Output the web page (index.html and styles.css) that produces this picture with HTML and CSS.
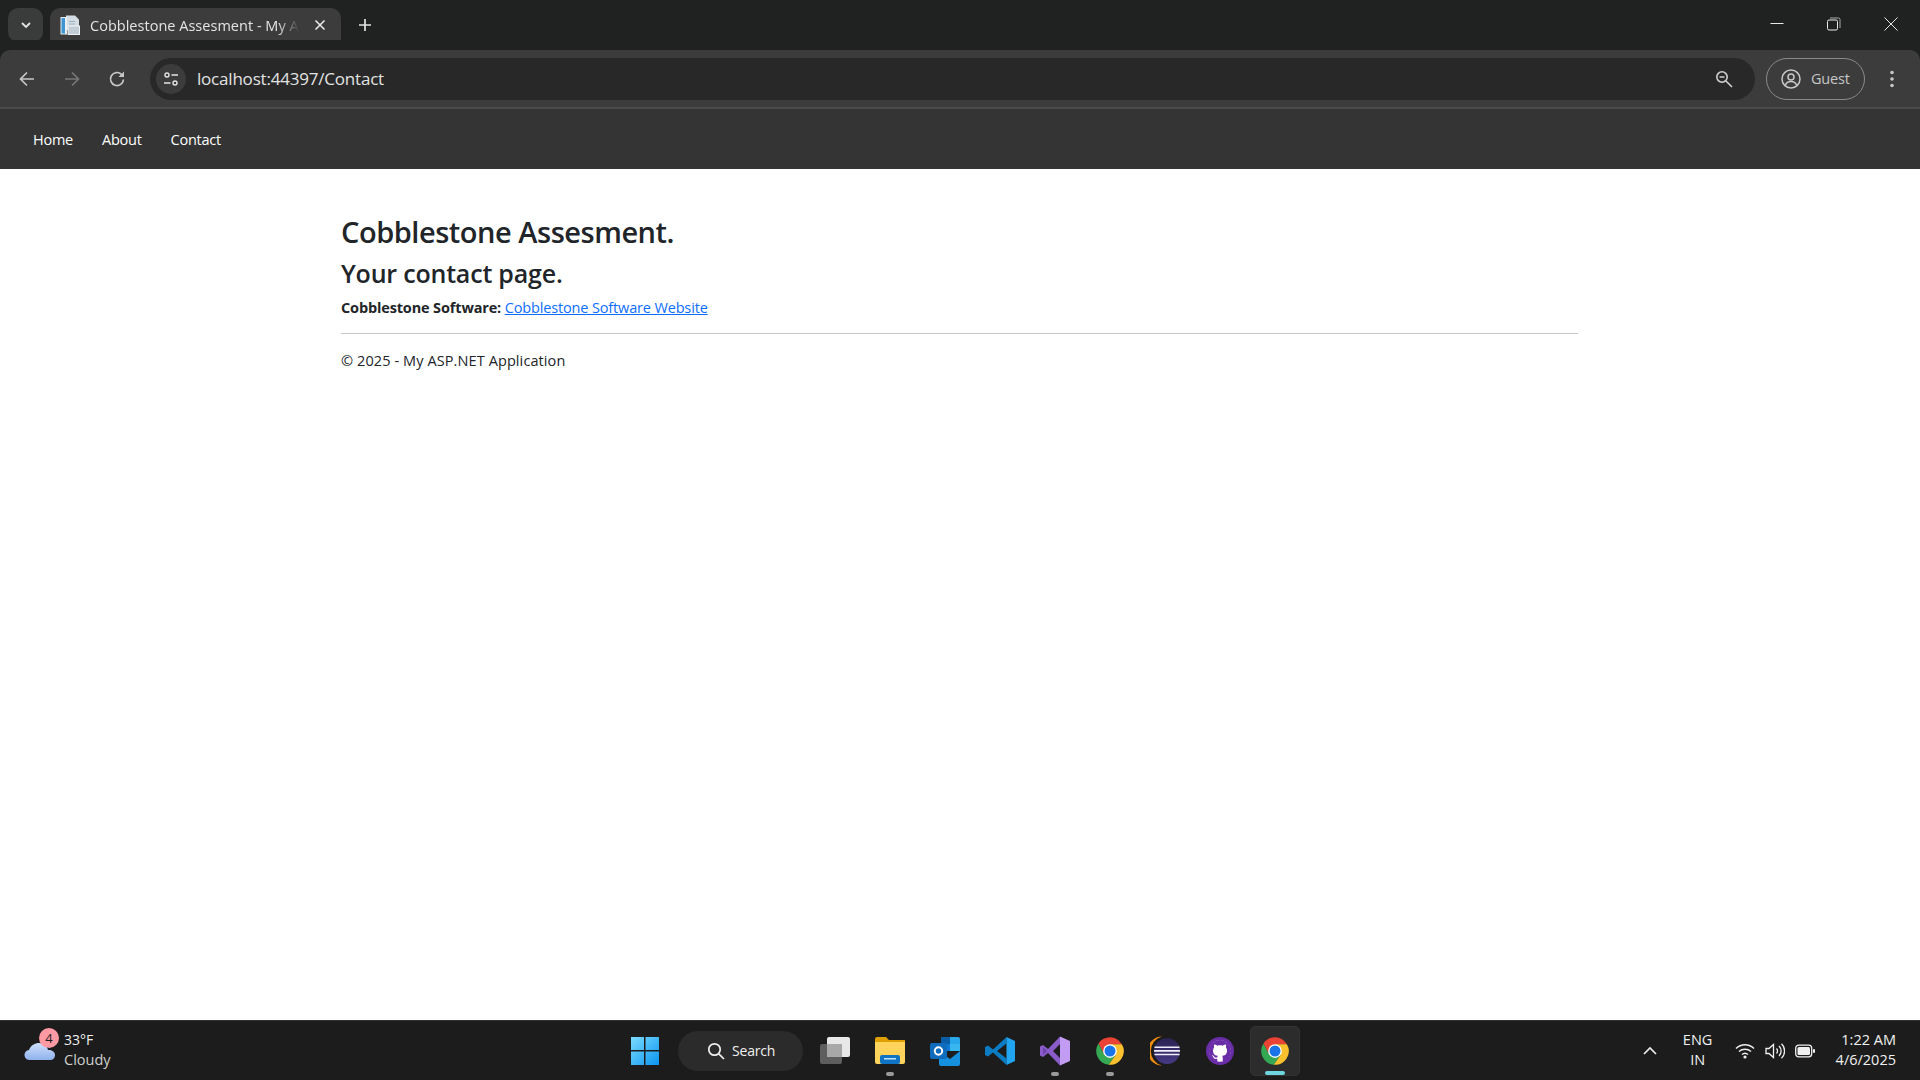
FILE: index.html
```html
<!DOCTYPE html>
<html lang="en">
<head>
<meta charset="utf-8">
<title>Cobblestone Assesment - My ASP.NET Application</title>
<link rel="stylesheet" href="styles.css">
</head>
<body>
<svg class="defs" width="0" height="0" aria-hidden="true">
  <symbol id="chrome" viewBox="0 0 48 48">
    <path fill="#ea4335" d="M43 13A22 22 0 0 0 5.500 12L14.500 29.500 24 13Z"/>
    <path fill="#34a853" d="M5.500 12A22 22 0 0 0 22 46L33.500 29.500H14.500Z"/>
    <path fill="#fbc02d" d="M43 13H24L33.500 29.500 22 46A22 22 0 0 0 43 13Z"/>
    <circle cx="24" cy="24" r="11" fill="#fff"/>
    <circle cx="24" cy="24" r="8.800" fill="#1a73e8"/>
  </symbol>
  <linearGradient id="winGrad" x1="0" y1="0" x2="1" y2="1">
    <stop offset="0" stop-color="#7cdcff"/><stop offset="1" stop-color="#0a94f0"/>
  </linearGradient>
  <linearGradient id="eclipseGrad" x1="0" y1="0" x2="0" y2="1">
    <stop offset="0" stop-color="#2a2350"/><stop offset="1" stop-color="#473a86"/>
  </linearGradient>
</svg>

<header class="tabstrip">
  <div class="tab-menu">
    <svg width="12" height="12" viewBox="0 0 12 12"><path d="M2 4l4 4 4-4" fill="none" stroke="#e3e3e3" stroke-width="1.800"/></svg>
  </div>
  <div class="tab">
    <svg class="favicon" width="20" height="20" viewBox="0 0 20 20">
      <path fill="#d5dde4" d="M6 0.500h9l4 4V15H6z"/>
      <rect x="0.500" y="2" width="6.500" height="17.500" fill="#e8eef3"/>
      <rect x="1.500" y="3" width="3.500" height="15.500" fill="#3f94d2"/>
      <rect x="8" y="11" width="11.500" height="8.500" fill="#c2ccd4" stroke="#eef2f5"/>
      <path fill="#9fb0bd" d="M9 6h6v1H9zM9 8.500h6v1H9z"/>
    </svg>
    <span class="tab-title">Cobblestone Assesment - My AS</span>
    <svg class="tab-close" width="12" height="12" viewBox="0 0 12 12"><path d="M1.500 1.500l9 9m0-9l-9 9" stroke="#e8e8e8" stroke-width="1.600"/></svg>
  </div>
  <svg class="new-tab" width="14" height="14" viewBox="0 0 14 14"><path d="M7 1v12M1 7h12" stroke="#e3e3e3" stroke-width="1.700"/></svg>
  <div class="window-controls">
    <svg class="win-btn" width="14" height="14" viewBox="0 0 14 14"><path d="M0.500 6.500h13" stroke="#e8e8e8"/></svg>
    <svg class="win-btn" width="14" height="14" viewBox="0 0 14 14"><rect x="0.500" y="3" width="10" height="10" rx="1.500" fill="none" stroke="#e8e8e8"/><path d="M3 1h8.500a1.500 1.500 0 0 1 1.500 1.500V11" fill="none" stroke="#a8a8a8"/></svg>
    <svg class="win-btn" width="14" height="14" viewBox="0 0 14 14"><path d="M0.500 0.500l13 13m0-13l-13 13" stroke="#e8e8e8"/></svg>
  </div>
</header>

<div class="toolbar">
  <svg class="nav-icon" width="18" height="18" viewBox="0 0 18 18"><path d="M16 9H2.500M9 2.500L2.500 9 9 15.500" fill="none" stroke="#c7c7c7" stroke-width="1.700"/></svg>
  <svg class="nav-icon" width="18" height="18" viewBox="0 0 18 18"><path d="M2 9h13.500M9 2.500L15.500 9 9 15.500" fill="none" stroke="#777" stroke-width="1.700"/></svg>
  <svg class="nav-icon" width="18" height="18" viewBox="0 0 18 18"><path d="M15.500 9.500A6.500 6.500 0 1 1 13.500 4.300L15.500 6" fill="none" stroke="#c7c7c7" stroke-width="1.700"/><path d="M16 1.500V7H10.500z" fill="#c7c7c7"/></svg>
  <div class="omnibox">
    <span class="site-info">
      <svg width="16" height="16" viewBox="0 0 16 16"><circle cx="4" cy="4" r="2" fill="none" stroke="#e3e3e3" stroke-width="1.400"/><path d="M8.500 4H15M1 12h6.500" stroke="#e3e3e3" stroke-width="1.400"/><circle cx="12" cy="12" r="2" fill="none" stroke="#e3e3e3" stroke-width="1.400"/></svg>
    </span>
    <span class="url">localhost:44397/Contact</span>
    <svg class="zoom-icon" width="18" height="18" viewBox="0 0 18 18"><circle cx="7" cy="7" r="5.200" fill="none" stroke="#d0d0d0" stroke-width="1.600"/><path d="M4.500 7h5M11 11l6 6" stroke="#d0d0d0" stroke-width="1.600"/></svg>
  </div>
  <div class="guest">
    <svg width="20" height="20" viewBox="0 0 20 20"><circle cx="10" cy="10" r="9" fill="none" stroke="#c7c7c7" stroke-width="1.500"/><circle cx="10" cy="8" r="3" fill="none" stroke="#c7c7c7" stroke-width="1.500"/><path d="M4.500 16c1-3 3-3.500 5.500-3.500s4.500.5 5.500 3.500" fill="none" stroke="#c7c7c7" stroke-width="1.500"/></svg>
    <span>Guest</span>
  </div>
  <svg class="kebab" width="6" height="18" viewBox="0 0 6 18"><circle cx="3" cy="2.500" r="1.800" fill="#c7c7c7"/><circle cx="3" cy="9" r="1.800" fill="#c7c7c7"/><circle cx="3" cy="15.500" r="1.800" fill="#c7c7c7"/></svg>
</div>

<nav class="site-nav">
  <a href="#">Home</a>
  <a href="#">About</a>
  <a href="#">Contact</a>
</nav>

<main class="page">
  <h2>Cobblestone Assesment.</h2>
  <h3>Your contact page.</h3>
  <p class="contact-line"><strong>Cobblestone Software:</strong> <a href="#">Cobblestone Software Website</a></p>
  <hr>
  <footer>© 2025 - My ASP.NET Application</footer>
</main>

<div class="taskbar">
  <div class="weather">
    <span class="weather-icon">
      <svg width="32" height="22" viewBox="0 0 32 22"><defs><linearGradient id="cloud" x1="0" y1="0" x2="0" y2="1"><stop offset="0" stop-color="#cfe0fb"/><stop offset="1" stop-color="#8fb2ee"/></linearGradient></defs><path fill="url(#cloud)" d="M6 21a5 5 0 0 1-1-10C7 6 11 4 15 4c5 0 8 3 9 7 4-.5 7 2 7 5 0 3-2 5-5 5z"/></svg>
      <span class="badge">4</span>
    </span>
    <span class="weather-text"><span class="temp">33°F</span><span class="cond">Cloudy</span></span>
  </div>
  <div class="start">
    <svg width="30" height="30" viewBox="0 0 30 30"><path fill="url(#winGrad)" d="M1 1h13v13H1zM15.500 1H29v13H15.500zM1 15.500h13V29H1zM15.500 15.500H29V29H15.500z"/></svg>
  </div>
  <div class="search">
    <svg width="18" height="18" viewBox="0 0 18 18"><circle cx="7.500" cy="7.500" r="5.700" fill="none" stroke="#f0f0f0" stroke-width="1.700"/><path d="M11.800 11.800L17 17" stroke="#f0f0f0" stroke-width="1.700"/></svg>
    <span>Search</span>
  </div>
  <div class="app first">
    <svg width="30" height="30" viewBox="0 0 30 30"><rect x="0" y="8" width="22" height="20" rx="2" fill="#5e5e5e"/><rect x="7" y="1" width="23" height="20" rx="2" fill="#e8e8e8"/><rect x="7" y="8" width="15" height="13" fill="#a8a8a8"/></svg>
  </div>
  <div class="app">
    <svg width="30" height="30" viewBox="0 0 30 30"><path fill="#e0a100" d="M0 3a2 2 0 0 1 2-2h9l3 3h16v6H0z"/><path fill="#ffd35c" d="M0 6h30v20a2 2 0 0 1-2 2H2a2 2 0 0 1-2-2z"/><rect x="5" y="19" width="20" height="9" rx="2" fill="#0f74c4"/><rect x="9" y="22" width="12" height="1.500" fill="#bfe2ff"/></svg>
    <i class="dot"></i>
  </div>
  <div class="app">
    <svg width="30" height="30" viewBox="0 0 30 30"><path fill="#0a5ea8" d="M11 1h17v14H11z"/><path fill="#28a8ea" d="M20 1h8a2 2 0 0 1 2 2v6H20z"/><path fill="#0f78d4" d="M11 8h19v7H11z"/><path fill="#38b6f0" d="M20 8h10v7H20z"/><path fill="#1490df" d="M9 15l11 8 10-8v13a2 2 0 0 1-2 2H11a2 2 0 0 1-2-2z"/><rect x="0" y="7" width="17" height="16" rx="2" fill="#0f6cbd"/><circle cx="8.500" cy="15" r="3.700" fill="none" stroke="#fff" stroke-width="2"/></svg>
  </div>
  <div class="app">
    <svg width="30" height="30" viewBox="0 0 30 30"><path fill="#0a7cc4" d="M21.500 1L8 13.500 3 9.500 0 11v8l3 1.500 5-4 13.500 12.500v-6.500L12 15l9.500-7.500z"/><path fill="#22a5f1" d="M21.500 1L30 5v20l-8.500 4z"/></svg>
  </div>
  <div class="app">
    <svg width="30" height="30" viewBox="0 0 30 30"><path fill="#c19cf2" d="M20 0.500L30 5v20l-10 4.500z"/><path fill="#8a5cc9" d="M20 0.500L8 13 3 9 0 10.500v9L3 21 8 17l12 12.500V22l-7-7 7-7z"/><path fill="#6d44ac" d="M3 11l4 4-4 4z"/></svg>
    <i class="dot"></i>
  </div>
  <div class="app">
    <svg width="30" height="30"><use href="#chrome"/></svg>
    <i class="dot"></i>
  </div>
  <div class="app">
    <svg width="30" height="30" viewBox="0 0 30 30"><path fill="#f28d10" d="M12 0.500A15 15 0 0 0 12 29.500 14.500 14.500 0 0 1 12 0.500z"/><circle cx="17" cy="15" r="13" fill="url(#eclipseGrad)"/><path fill="#f0eef8" d="M4.500 10.500h25v1.600h-25zM4 14h26v1.800H4zM4.500 17.700h25v1.600h-25z"/></svg>
  </div>
  <div class="app">
    <svg width="30" height="30" viewBox="0 0 30 30"><circle cx="15" cy="15" r="14" fill="#6a2da8"/><circle cx="15" cy="15" r="10.700" fill="#fff"/><g transform="translate(4 4) scale(1.375)"><path fill="#6a2da8" d="M8 0C3.580 0 0 3.580 0 8c0 3.540 2.290 6.530 5.470 7.590.4.070.55-.17.55-.38 0-.19-.01-.82-.01-1.490-2.010.37-2.530-.49-2.690-.94-.09-.23-.48-.94-.82-1.130-.28-.15-.68-.52-.01-.53.63-.01 1.080.58 1.230.82.72 1.210 1.870.87 2.330.66.070-.52.28-.87.51-1.070-1.780-.2-3.640-.89-3.640-3.950 0-.87.31-1.590.82-2.150-.08-.2-.36-1.020.08-2.120 0 0 .67-.21 2.200.82.64-.18 1.320-.27 2-.27.68 0 1.360.09 2 .27 1.530-1.040 2.200-.82 2.200-.82.44 1.100.16 1.920.08 2.120.51.56.82 1.270.82 2.150 0 3.070-1.870 3.750-3.650 3.950.29.25.54.73.54 1.480 0 1.070-.01 1.930-.01 2.200 0 .21.15.46.55.38A8.013 8.013 0 0 0 16 8c0-4.420-3.580-8-8-8z"/></g></svg>
  </div>
  <div class="app active">
    <svg width="30" height="30"><use href="#chrome"/></svg>
    <i class="bar"></i>
  </div>
  <div class="tray">
    <svg width="14" height="10" viewBox="0 0 14 10"><path d="M1 8l6-6 6 6" fill="none" stroke="#f0f0f0" stroke-width="1.600"/></svg>
    <div class="lang"><span>ENG</span><span>IN</span></div>
    <div class="tray-icons">
      <svg width="20" height="18" viewBox="0 0 20 18"><path d="M1 6.500c5-5 13-5 18 0M4 9.500c3.300-3 8.700-3 12 0M7 12.500c1.700-1.500 4.300-1.500 6 0" fill="none" stroke="#f0f0f0" stroke-width="1.400"/><circle cx="10" cy="15" r="1.600" fill="#f0f0f0"/></svg>
      <svg width="20" height="18" viewBox="0 0 20 18"><path d="M1 6.500h3L8.500 2.500v13L4 11.500H1z" fill="none" stroke="#f0f0f0" stroke-width="1.300"/><path d="M11.500 6.500a3.500 3.500 0 0 1 0 5M14 4a7 7 0 0 1 0 10M16.500 1.800a10 10 0 0 1 0 14.400" fill="none" stroke="#f0f0f0" stroke-width="1.300"/></svg>
      <svg width="20" height="14" viewBox="0 0 20 14"><rect x="0.700" y="1.200" width="16" height="11.600" rx="3" fill="none" stroke="#f0f0f0" stroke-width="1.300"/><rect x="2.500" y="3" width="12.500" height="8" rx="1.500" fill="#f0f0f0"/><rect x="18" y="5" width="2" height="4" rx="1" fill="#f0f0f0"/></svg>
    </div>
    <div class="clock"><span>1:22 AM</span><span>4/6/2025</span></div>
  </div>
</div>
</body>
</html>
```
FILE: styles.css
```css
* { box-sizing: border-box; }
html, body { height: 100%; }
body {
  margin: 0;
  height: 100vh;
  display: flex;
  flex-direction: column;
  overflow: hidden;
  background: #fff;
  font-family: "Open Sans", "Noto Sans", sans-serif;
  color: #212529;
}
.defs { position: absolute; }

/* Browser chrome */
.tabstrip {
  height: 50px;
  flex: none;
  display: flex;
  align-items: flex-start;
  background: #202222;
  padding: 8px 0 0 8px;
}
.tab-menu {
  width: 35px;
  height: 34px;
  border-radius: 10px;
  background: #3a3b3b;
  display: flex;
  align-items: center;
  justify-content: center;
}
.tab {
  width: 291px;
  height: 42px;
  margin-left: 7px;
  border-radius: 10px 10px 0 0;
  background: #3c3c3c;
  display: flex;
  align-items: center;
  padding: 0 14px 8px 10px;
  color: #e3e3e3;
  font-size: 14.5px;
}
.favicon { flex: none; }
.tab-title {
  flex: none;
  width: 218px;
  margin-left: 10px;
  white-space: nowrap;
  letter-spacing: 0.02px;
  -webkit-mask-image: linear-gradient(to right, #000 86%, transparent 96%);
  mask-image: linear-gradient(to right, #000 86%, transparent 96%);
}
.tab-close { margin-left: 6px; flex: none; }
.new-tab { margin: 10px 0 0 17px; }
.window-controls {
  margin-left: auto;
  display: flex;
  gap: 43px;
  padding: 9px 22px 0 0;
}
.toolbar {
  height: 59px;
  flex: none;
  display: flex;
  align-items: center;
  background: #3c3c3c;
  border-bottom: 2px solid #4a4a4a;
  padding: 0 0 0 18px;
  border-radius: 10px 10px 0 0;
  box-shadow: 0 -10px 0 #202222;
}
.nav-icon { margin-right: 27px; flex: none; }
.nav-icon:nth-child(3) { margin-right: 0; }
.omnibox {
  width: 1605px;
  height: 42px;
  margin-left: 24px;
  border-radius: 21px;
  background: #282828;
  display: flex;
  align-items: center;
  padding: 0 16px 0 6px;
}
.site-info {
  width: 30px;
  height: 30px;
  border-radius: 50%;
  background: #3c3c3c;
  display: flex;
  align-items: center;
  justify-content: center;
  flex: none;
}
.url {
  margin-left: 11px;
  font-size: 17px;
  letter-spacing: -0.2px;
  color: #e3e3e3;
}
.zoom-icon { margin-left: auto; margin-right: 6px; }
.guest {
  width: 99px;
  height: 42px;
  margin-left: 11px;
  border: 1px solid #8a8a8a;
  border-radius: 21px;
  display: flex;
  align-items: center;
  gap: 10px;
  padding-left: 14px;
  color: #c7c7c7;
  font-size: 14.500px;
  letter-spacing: -0.2px;
}
.kebab { margin-left: 24px; }

/* Site navbar */
.site-nav {
  height: 60px;
  flex: none;
  display: flex;
  align-items: center;
  gap: 29px;
  padding: 0 0 0 33px;
  background: #343434;
}
.site-nav a {
  color: #fff;
  text-decoration: none;
  font-size: 14.5px;
  letter-spacing: -0.25px;
}

/* Page */
.page {
  flex: 1;
  width: 1237px;
  margin-left: 341px;
  padding-top: 39px;
}
h2 {
  margin: 0;
  font-size: 29px;
  line-height: 48px;
  font-weight: 600;
  letter-spacing: -0.47px;
}
h3 {
  margin: -1px 0 0;
  font-size: 25px;
  line-height: 36px;
  font-weight: 600;
  letter-spacing: -0.2px;
}
.contact-line {
  margin: 5px 0 0;
  font-size: 14.5px;
  line-height: 24px;
  letter-spacing: -0.15px;
}
.contact-line a { color: #0d6efd; }
hr {
  margin: 13px 0 0;
  border: 0;
  border-top: 1px solid #c8c8c8;
}
footer {
  margin-top: 15px;
  font-size: 14.5px;
  line-height: 24px;
  letter-spacing: 0.1px;
}

/* Taskbar */
.taskbar {
  height: 60px;
  flex: none;
  display: flex;
  align-items: center;
  background: #1c1c1c;
  border-top: 1px solid #333;
  color: #f0f0f0;
  font-size: 14px;
}
.weather {
  width: 620px;
  display: flex;
  align-items: center;
  padding-left: 24px;
  flex: none;
}
.weather-icon {
  position: relative;
  width: 32px;
  height: 22px;
  margin-top: -2px;
  display: block;
}
.badge {
  position: absolute;
  top: -11px;
  left: 15px;
  width: 20px;
  height: 20px;
  border-radius: 50%;
  background: #ff99a4;
  color: #1c1c1c;
  font-size: 13px;
  line-height: 20px;
  text-align: center;
}
.weather-text {
  margin: -2px 0 0 8px;
  display: flex;
  flex-direction: column;
  line-height: 20px;
}
.cond { color: #cfcfcf; font-size: 14.500px; }
.start {
  width: 50px;
  height: 50px;
  flex: none;
  display: flex;
  align-items: center;
  justify-content: center;
}
.search {
  width: 125px;
  height: 40px;
  margin-left: 8px;
  flex: none;
  border-radius: 20px;
  background: #2b2b2b;
  display: flex;
  align-items: center;
  gap: 7px;
  padding-left: 29px;
  font-size: 14px;
  letter-spacing: -0.2px;
}
.app {
  position: relative;
  width: 50px;
  height: 50px;
  margin-left: 5px;
  flex: none;
  display: flex;
  align-items: center;
  justify-content: center;
  border-radius: 5px;
}
.app.first { margin-left: 7px; }
.app.active { background: #2c2c2c; border: 1px solid #333; }
.dot, .bar {
  position: absolute;
  bottom: 0;
  left: 50%;
  height: 4px;
  border-radius: 2px;
  transform: translateX(-50%);
}
.dot { width: 8px; background: #9a9a9a; }
.bar { width: 20px; background: #6fd6e0; }
.tray {
  margin-left: auto;
  padding-right: 24px;
  display: flex;
  align-items: center;
  font-size: 14.500px;
}
.lang {
  width: 44px;
  margin: -1px 0 0 19px;
  display: flex;
  flex-direction: column;
  align-items: center;
  line-height: 20px;
}
.tray-icons {
  margin-left: 15px;
  display: flex;
  align-items: center;
  gap: 10px;
}
.clock {
  margin: -2px 0 0 21px;
  display: flex;
  flex-direction: column;
  align-items: flex-end;
  line-height: 20px;
}
```
